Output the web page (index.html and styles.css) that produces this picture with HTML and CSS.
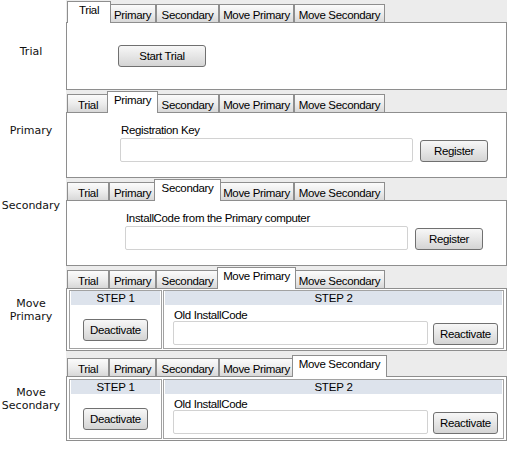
FILE: index.html
```html
<!DOCTYPE html>
<html>
<head>
<meta charset="utf-8">
<link rel="stylesheet" href="styles.css">
</head>
<body>
<div class="page">

  <section class="row">
    <div class="side side-1">Trial</div>
    <div class="tabctl">
      <div class="tabs">
        <div class="tab w-trial sel first">Trial</div>
        <div class="tab w-pri">Primary</div>
        <div class="tab w-sec">Secondary</div>
        <div class="tab w-mpri">Move Primary</div>
        <div class="tab w-msec">Move Secondary</div>
      </div>
      <div class="panel p1">
        <button class="btn btn-trial">Start Trial</button>
      </div>
    </div>
  </section>

  <section class="row">
    <div class="side side-2">Primary</div>
    <div class="tabctl">
      <div class="tabs">
        <div class="tab w-trial">Trial</div>
        <div class="tab w-pri sel">Primary</div>
        <div class="tab w-sec">Secondary</div>
        <div class="tab w-mpri">Move Primary</div>
        <div class="tab w-msec">Move Secondary</div>
      </div>
      <div class="panel p2">
        <div class="field-label">Registration Key</div>
        <div class="field-row">
          <div class="input in-key"></div>
          <button class="btn btn-reg">Register</button>
        </div>
      </div>
    </div>
  </section>

  <section class="row">
    <div class="side side-3">Secondary</div>
    <div class="tabctl">
      <div class="tabs">
        <div class="tab w-trial">Trial</div>
        <div class="tab w-pri">Primary</div>
        <div class="tab w-sec sel">Secondary</div>
        <div class="tab w-mpri">Move Primary</div>
        <div class="tab w-msec">Move Secondary</div>
      </div>
      <div class="panel p3">
        <div class="field-label">InstallCode from the Primary computer</div>
        <div class="field-row">
          <div class="input in-code"></div>
          <button class="btn btn-reg">Register</button>
        </div>
      </div>
    </div>
  </section>

  <section class="row">
    <div class="side side-4">Move<br>Primary</div>
    <div class="tabctl">
      <div class="tabs">
        <div class="tab w-trial">Trial</div>
        <div class="tab w-pri">Primary</div>
        <div class="tab w-sec">Secondary</div>
        <div class="tab w-mpri sel">Move Primary</div>
        <div class="tab w-msec">Move Secondary</div>
      </div>
      <div class="panel steps p4">
        <div class="cell">
          <div class="step-head">STEP 1</div>
          <div class="step1-body"><button class="btn btn-act">Deactivate</button></div>
        </div>
        <div class="cell">
          <div class="step-head">STEP 2</div>
          <div class="step2-label">Old InstallCode</div>
          <div class="step2-row">
            <div class="input in-old"></div>
            <button class="btn btn-act">Reactivate</button>
          </div>
        </div>
      </div>
    </div>
  </section>

  <section class="row row-last">
    <div class="side side-5">Move<br>Secondary</div>
    <div class="tabctl">
      <div class="tabs">
        <div class="tab w-trial">Trial</div>
        <div class="tab w-pri">Primary</div>
        <div class="tab w-sec">Secondary</div>
        <div class="tab w-mpri">Move Primary</div>
        <div class="tab w-msec sel">Move Secondary</div>
      </div>
      <div class="panel steps p5">
        <div class="cell">
          <div class="step-head">STEP 1</div>
          <div class="step1-body"><button class="btn btn-act">Deactivate</button></div>
        </div>
        <div class="cell">
          <div class="step-head">STEP 2</div>
          <div class="step2-label">Old InstallCode</div>
          <div class="step2-row">
            <div class="input in-old"></div>
            <button class="btn btn-act">Reactivate</button>
          </div>
        </div>
      </div>
    </div>
  </section>

</div>
</body>
</html>
```

FILE: styles.css
```css
* { box-sizing: border-box; }

body {
  margin: 0;
  background: #fff;
  font-family: "Liberation Sans", Arial, sans-serif;
  font-size: 11.5px;
  color: #000;
}

.page { width: 507px; }

.row { display: flex; }

.side {
  width: 66px;
  flex: none;
  padding-right: 4px;
  text-align: center;
  font-family: "DejaVu Sans", sans-serif;
  font-size: 11px;
  line-height: 13px;
  color: #111;
}
.side-1 { padding-top: 45px; }
.side-2 { padding-top: 34px; }
.side-3 { padding-top: 21px; }
.side-4 { padding-top: 31px; }
.side-5 { padding-top: 35px; }

.tabctl {
  flex: 1;
  background: #ececec;
  padding-top: 1px;
}
.row-last .tabctl { padding-top: 4px; }

.tabs {
  display: flex;
  align-items: flex-end;
  height: 21px;
  padding-left: 1px;
  position: relative;
  z-index: 1;
}

.tab {
  flex: none;
  height: 18px;
  border: 1px solid #8e8e8e;
  border-bottom: none;
  background: linear-gradient(#fbfbfb, #ebebeb 55%, #d8d8d8);
  text-align: center;
  padding-top: 4px;
  line-height: 13px;
  letter-spacing: -0.35px;
  white-space: nowrap;
}
.tab.sel {
  height: 22px;
  margin: 0 -2px -1px;
  background: #fff;
  padding-top: 2px;
  position: relative;
}
.tab.sel.first { margin-left: 0; }

.w-trial { width: 42px; }
.w-pri { width: 47px; }
.w-sec { width: 63px; }
.w-mpri { width: 75px; }
.w-msec { width: 91px; }
.sel.w-trial { width: 44px; }
.sel.w-pri { width: 51px; }
.sel.w-sec { width: 67px; }
.sel.w-mpri { width: 79px; }
.sel.w-msec { width: 95px; }

.panel {
  background: #fff;
  border: 1px solid #8e8e8e;
}

.p1 { height: 68px; padding: 22px 0 0 51px; }
.p2 { height: 66px; padding: 11px 0 0 53px; }
.p3 { height: 66px; padding: 11px 0 0 58px; }

.btn {
  display: block;
  height: 22px;
  padding: 0;
  border: 1px solid #707070;
  border-radius: 3px;
  background: linear-gradient(#f7f7f7, #e6e6e6 50%, #d4d4d4);
  font-family: "Liberation Sans", Arial, sans-serif;
  font-size: 11.5px;
  letter-spacing: -0.35px;
  color: #000;
  line-height: 20px;
  text-align: center;
}
.btn-trial { width: 88px; }
.btn-reg { width: 68px; }
.btn-act { width: 65px; }

.field-label {
  line-height: 13px;
  padding-left: 1px;
  letter-spacing: -0.35px;
}
.field-row {
  display: flex;
  align-items: flex-end;
  gap: 7px;
  margin-top: 1px;
}
.input {
  height: 24px;
  background: #fff;
  border: 1px solid #d2d2d2;
  border-radius: 2px;
}
.in-key { width: 293px; }
.in-code { width: 283px; }
.in-old { width: 255px; }

.steps {
  display: grid;
  grid-template-columns: 93px 341px;
  column-gap: 1px;
  padding: 1px 2px;
}
.p4 { height: 63px; }
.p5 { height: 65px; padding-top: 2px; }

.cell {
  border: 1px solid #a2a2a2;
  padding: 0 1px;
}
.step-head {
  height: 14px;
  background: #dde3ec;
  text-align: center;
  line-height: 13px;
  padding-top: 1px;
  letter-spacing: -0.2px;
}
.step1-body {
  display: flex;
  justify-content: center;
  padding-top: 14px;
}
.step2-label {
  margin-top: 4px;
  padding-left: 9px;
  line-height: 12px;
  letter-spacing: -0.35px;
}
.step2-row {
  display: flex;
  align-items: flex-end;
  gap: 5px;
  margin-left: 8px;
}
```
